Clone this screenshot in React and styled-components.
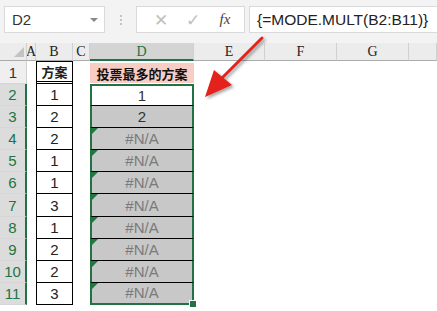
import React from 'react';
import styled, { createGlobalStyle } from 'styled-components';

const Global = createGlobalStyle`
  html, body { margin: 0; padding: 0; background: #ffffff; }
  body { font-family: "Liberation Sans", Arial, sans-serif; }
`

const Page = styled.div`
  position: relative;
  width: 437px;
  height: 311px;
  overflow: hidden;
  background: #ffffff;
  display: flex;
  flex-direction: column;
`
const FormulaBar = styled.div`
  height: 43px;
  flex: none;
  background: #f3f3f3;
  display: flex;
  align-items: flex-start;
  padding: 6px 0 0 4px;
  box-sizing: border-box;
`
const NameBox = styled.div`
  width: 101px;
  height: 27px;
  box-sizing: border-box;
  background: #ffffff;
  border: 1px solid #dadada;
  display: flex;
  align-items: center;
  justify-content: space-between;
  padding: 0 6px 0 7px;
  font-size: 15px;
  color: #333333;
`
const Caret = styled.span`
  width: 0;
  height: 0;
  border-left: 4px solid transparent;
  border-right: 4px solid transparent;
  border-top: 4px solid #888888;
`
const Dots = styled.div`
  width: 31px;
  height: 27px;
  display: flex;
  flex-direction: column;
  align-items: center;
  justify-content: center;
  gap: 2px;
  span {
    width: 2px;
    height: 2px;
    background: #c4c4c4;
  }
`
const FuncBox = styled.div`
  width: 109px;
  height: 27px;
  box-sizing: border-box;
  background: #ffffff;
  border: 1px solid #dadada;
  display: flex;
  align-items: center;
  padding: 0 0 0 10px;
`
const FuncIcon = styled.span`
  width: ${p => p.w}px;
  display: flex;
  justify-content: center;
  align-items: center;
  color: ${p => p.color || '#c0c0c0'};
  font-size: ${p => p.size || 16}px;
  font-family: ${p => p.serif ? '"Liberation Serif", serif' : '"DejaVu Sans", sans-serif'};
  font-style: ${p => p.serif ? 'italic' : 'normal'};
`
const FormulaInput = styled.div`
  flex: 1;
  margin-left: 4px;
  height: 27px;
  box-sizing: border-box;
  background: #ffffff;
  border: 1px solid #dadada;
  border-right: none;
  display: flex;
  align-items: center;
  padding-left: 7px;
  font-size: 15.5px;
  color: #222222;
  white-space: nowrap;
`

const Sheet = styled.div`
  flex: 1;
  display: grid;
  grid-template-columns: 27px 9px 37px 17px 104px 71px 72px 72px 1fr;
  grid-template-rows: 18px 23px repeat(10, 22.1px) 1fr;
`
const Corner = styled.div`
  background: #ececec;
  border-bottom: 1px solid #ababab;
  border-right: 1px solid #d0d0d0;
  position: relative;
  &::after {
    content: '';
    position: absolute;
    right: 2px;
    bottom: 3px;
    border-left: 10px solid transparent;
    border-bottom: 10px solid #c3c3c3;
  }
`
const ColHead = styled.div`
  background: ${p => p.sel ? '#d4d4d4' : '#ececec'};
  color: ${p => p.sel ? '#217346' : '#222222'};
  border-bottom: ${p => p.sel ? '2px solid #217346' : '1px solid #ababab'};
  border-right: 1px solid #d0d0d0;
  box-sizing: border-box;
  display: flex;
  align-items: center;
  justify-content: center;
  font-family: "Liberation Serif", "DejaVu Serif", serif;
  font-size: 14px;
  padding-top: 1px;
`
const RowHead = styled.div`
  grid-column: 1;
  background: ${p => p.sel ? '#dcdcdc' : '#efefef'};
  color: ${p => p.sel ? '#217346' : '#333333'};
  border-right: ${p => p.sel ? '2px solid #217346' : '1px solid #d0d0d0'};
  border-bottom: 1px solid #d6d6d6;
  box-sizing: border-box;
  display: flex;
  align-items: center;
  justify-content: center;
  font-size: 15px;
`
const BCell = styled.div`
  grid-column: 3;
  background: #ffffff;
  border: 1px solid #000000;
  border-top: ${p => p.first ? '1px solid #000000' : 'none'};
  border-bottom: ${p => p.head ? '3px double #000000' : '1px solid #000000'};
  box-sizing: border-box;
  display: flex;
  align-items: center;
  justify-content: center;
  font-size: ${p => p.head ? 13 : 15}px;
  font-weight: ${p => p.head ? 700 : 400};
  font-family: "Liberation Sans", "Noto Sans CJK SC", sans-serif;
  color: #222222;
`
const TitleCell = styled.div`
  grid-column: 5;
  grid-row: 2;
  background: #f8cdc5;
  margin: 2px 0 1px;
  display: flex;
  align-items: center;
  justify-content: center;
  font-size: 13px;
  font-weight: 700;
  font-family: "Noto Sans CJK SC", sans-serif;
  color: #111111;
`
const DCell = styled.div`
  grid-column: 5;
  position: relative;
  box-sizing: border-box;
  background: ${p => p.gray ? '#c8c8c8' : '#ffffff'};
  border-left: 2px solid #217346;
  border-right: 2px solid #217346;
  border-top: ${p => p.first ? '2px solid #217346' : 'none'};
  border-bottom: ${p => p.last ? '2px solid #217346' : '1px solid #000000'};
  display: flex;
  align-items: center;
  justify-content: center;
  font-size: 15px;
  color: ${p => p.err ? '#7a7a7a' : '#333333'};
  ${p => p.err && `
    &::before {
      content: '';
      position: absolute;
      left: 0;
      top: 0;
      border-top: 6px solid #1e7b3c;
      border-right: 6px solid transparent;
    }
  `}
`
const Handle = styled.span`
  position: absolute;
  right: -5px;
  bottom: -5px;
  width: 6px;
  height: 6px;
  background: #217346;
  border: 1px solid #ffffff;
`
const Arrow = styled.svg`
  position: absolute;
  left: 196px;
  top: 30px;
  pointer-events: none;
`

const cols = ['A', 'B', 'C', 'D', 'E', 'F', 'G', ''];
const bValues = [1, 2, 2, 1, 1, 3, 1, 2, 2, 3];
const dValues = ['1', '2', '#N/A', '#N/A', '#N/A', '#N/A', '#N/A', '#N/A', '#N/A', '#N/A'];

function App() {
  return (
    <Page>
      <Global />
      <FormulaBar>
        <NameBox>D2<Caret /></NameBox>
        <Dots><span /><span /><span /></Dots>
        <FuncBox>
          <FuncIcon w={28} size={17}>✕</FuncIcon>
          <FuncIcon w={36} size={17}>✓</FuncIcon>
          <FuncIcon w={28} size={15} serif color="#444444">fx</FuncIcon>
        </FuncBox>
        <FormulaInput>{'{=MODE.MULT(B2:B11)}'}</FormulaInput>
      </FormulaBar>

      <Sheet>
        <Corner />
        {cols.map(c => <ColHead key={c || 'x'} sel={c === 'D'}>{c}</ColHead>)}

        {Array.from({ length: 11 }, (_, i) => (
          <RowHead key={i} sel={i > 0} style={{ gridRow: i + 2 }}>{i + 1}</RowHead>
        ))}

        <BCell head first style={{ gridRow: 2 }}>方案</BCell>
        {bValues.map((v, i) => (
          <BCell key={i} style={{ gridRow: i + 3 }}>{v}</BCell>
        ))}

        <TitleCell>投票最多的方案</TitleCell>
        {dValues.map((v, i) => (
          <DCell
            key={i}
            style={{ gridRow: i + 3 }}
            first={i === 0}
            last={i === dValues.length - 1}
            gray={i > 0}
            err={v === '#N/A'}
          >
            {v}
            {i === dValues.length - 1 && <Handle />}
          </DCell>
        ))}
      </Sheet>

      <Arrow width="80" height="80" viewBox="0 0 80 80">
        <defs>
          <filter id="sh" x="-30%" y="-30%" width="160%" height="160%">
            <feDropShadow dx="2" dy="2" stdDeviation="1.5" floodColor="#000" floodOpacity="0.35" />
          </filter>
        </defs>
        <g filter="url(#sh)">
          <line x1="66" y1="8" x2="24" y2="50" stroke="#e3211f" strokeWidth="3" strokeLinecap="round" />
          <polygon points="9,67 18,40 36,55" fill="#e3211f" />
        </g>
      </Arrow>
    </Page>
  );
}

export default App;
